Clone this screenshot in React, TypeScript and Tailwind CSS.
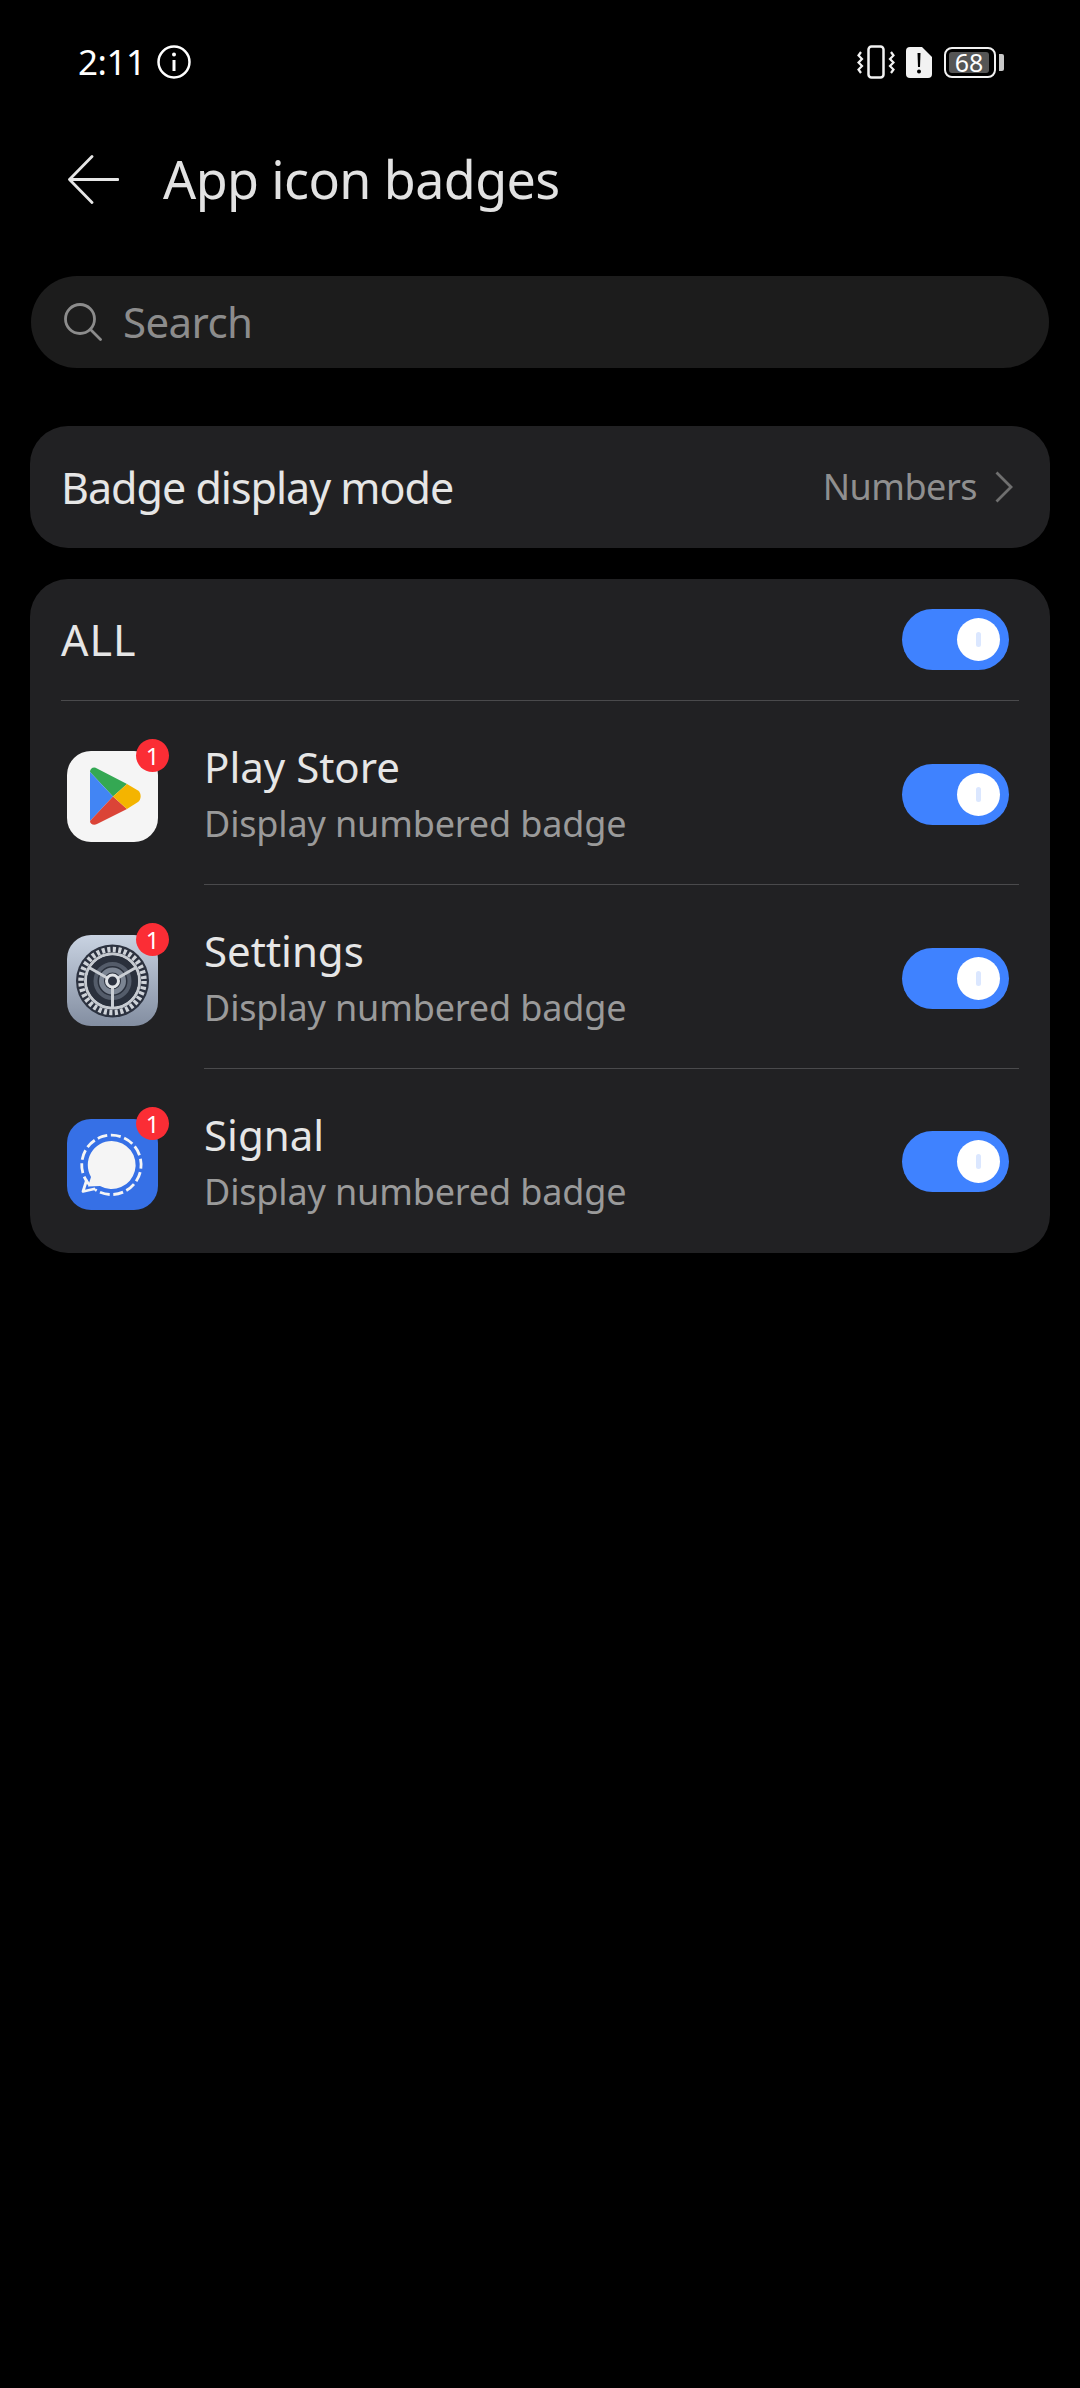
import type { ReactNode } from "react";

const Toggle = ({ className = "" }: { className?: string }) => (
  <div className={`flex h-[61px] w-[107px] items-center justify-end rounded-full bg-[#3f82ff] pr-[9px] ${className}`}>
    <div className="flex h-[43px] w-[43px] items-center justify-center rounded-full bg-white">
      <div className="h-[15px] w-[5px] rounded-full bg-[#dbe7ff]" />
    </div>
  </div>
);

const PlayIcon = () => (
  <div className="h-full w-full rounded-[24px] bg-[#f5f5f5]">
    <svg viewBox="0 0 91 91" className="h-full w-full">
      <path d="M23 21c0-4 4-5.500 7-3.500L60 33 46 45.500z" fill="#34a853" />
      <path d="M23 21v49l23-24.500z" fill="#4285f4" />
      <path d="M23 70c0 3.500 4 4.500 7 3L60 58 46 45.500z" fill="#db4437" />
      <path d="M60 33l11 6.500c3.500 2.500 3.500 9 0 11.500L60 58 46 45.500z" fill="#f4b400" />
    </svg>
  </div>
);

const SettingsIcon = () => (
  <div className="h-full w-full rounded-[24px] bg-gradient-to-b from-[#c9d3e2] to-[#838ea1]">
    <svg viewBox="0 0 91 91" className="h-full w-full">
      <circle cx="45.500" cy="46" r="36.500" fill="#2c3240" />
      <circle cx="45.500" cy="46" r="31.500" fill="none" stroke="#cfd3d9" strokeWidth="5.500" strokeDasharray="3.100 2.400" />
      <circle cx="45.500" cy="46" r="27" fill="none" stroke="#c6cad0" strokeWidth="3" />
      <circle cx="45.500" cy="46" r="25.500" fill="#2a303c" />
      <circle cx="45.500" cy="46" r="17" fill="none" stroke="#545c6a" strokeWidth="4" />
      <circle cx="45.500" cy="46" r="11" fill="none" stroke="#7b8492" strokeWidth="5" />
      <path d="M45.500 46v27M45.500 46 22 32.500M45.500 46 69 32.500" stroke="#c9cdd3" strokeWidth="3" />
      <circle cx="45.500" cy="46" r="6" fill="#2c3240" stroke="#dfe2e6" strokeWidth="3" />
    </svg>
  </div>
);

const SignalIcon = () => (
  <div className="h-full w-full rounded-[24px] bg-[#3670e6]">
    <svg viewBox="0 0 91 91" className="h-full w-full">
      <path d="M44.700 22a24 24 0 1 1-11.700 45L21 67.500 24 58a24 24 0 0 1 20.700-36z" fill="#f5f5f5" />
      <path d="M22.500 65.900A29.700 29.700 0 1 1 28 70.600" fill="none" stroke="#f5f5f5" strokeWidth="2.800" strokeDasharray="10 3.600" />
      <path d="M19.500 61.500 16 72.500l11-2.500" fill="none" stroke="#f5f5f5" strokeWidth="2.800" strokeLinejoin="round" strokeLinecap="round" />
    </svg>
  </div>
);

const apps: { name: string; icon: ReactNode; last?: boolean }[] = [
  { name: "Play Store", icon: <PlayIcon /> },
  { name: "Settings", icon: <SettingsIcon /> },
  { name: "Signal", icon: <SignalIcon />, last: true },
];

const AppRow = ({ name, icon, last }: { name: string; icon: ReactNode; last?: boolean }) => (
  <div className="flex h-[184px] items-stretch pl-[37px] pr-[31px]">
    <div className="relative mt-[50px] h-[91px] w-[91px]">
      {icon}
      <div className="absolute left-[69px] top-[-12px] flex h-[33px] w-[33px] items-center justify-center rounded-full bg-[#fb2d35] text-[24px] leading-none text-white">
        1
      </div>
    </div>
    <div className={`ml-[46px] flex flex-1 items-center justify-between pr-[10px] ${last ? "" : "border-b border-[#4a4a4c]"}`}>
      <div className="mt-[6px]">
        <div className="text-[42px] leading-[56px] text-[#e6e6e6]">{name}</div>
        <div className="text-[36px] leading-[58px] tracking-[-0.15px] text-[#9a9a9a]">Display numbered badge</div>
      </div>
      <Toggle className={last ? "" : "mt-[3px]"} />
    </div>
  </div>
);

const StatusIcons = () => (
  <div className="flex items-center">
    <svg width="38" height="34" viewBox="0 0 38 34" fill="none" stroke="#f2f2f2" strokeWidth="2.500">
      <rect x="11.500" y="1.500" width="15" height="31" rx="3" />
      <path d="M4 7l-2.500 3.500L5 14l-3.500 3.500L5 21l-3.500 3.500L4 28M34 7l2.500 3.500L33 14l3.500 3.500L33 21l3.500 3.500L34 28" strokeWidth="2.200" />
    </svg>
    <svg width="26" height="31" viewBox="0 0 26 31" className="ml-[11px]">
      <path d="M4 0h12l10 10v17a4 4 0 0 1-4 4H4a4 4 0 0 1-4-4V4a4 4 0 0 1 4-4z" fill="#f2f2f2" />
      <path d="M11.500 6h3l-.5 14h-2z" fill="#000" />
      <circle cx="13" cy="24.500" r="2" fill="#000" />
    </svg>
    <div className="ml-[12px] flex h-[31px] w-[52px] items-center rounded-[8px] border-[2.500px] border-[#f2f2f2] p-[3px]">
      <div className="flex h-full w-[40px] items-center justify-center rounded-[3px] bg-[#555555] text-[25px] leading-none text-white">
        68
      </div>
    </div>
    <div className="ml-[3px] h-[17px] w-[5px] rounded-r-[2px] bg-[#c8c8c8]" />
  </div>
);

export default function App() {
  return (
    <div className="h-[2388px] w-[1080px] overflow-hidden bg-black font-['Noto_Sans',sans-serif]">
      <div className="flex h-[130px] items-start justify-between pl-[78px] pr-[76px] pt-[45px]">
        <div className="flex items-center">
          <span className="text-[35px] leading-[34px] tracking-[-0.5px] text-white">2:11</span>
          <svg width="34" height="34" viewBox="0 0 34 34" fill="none" stroke="#fff" className="ml-[12px]">
            <circle cx="17" cy="17" r="15.500" strokeWidth="2.500" />
            <path d="M17 15v11" strokeWidth="3" />
            <circle cx="17" cy="9.500" r="2" fill="#fff" stroke="none" />
          </svg>
        </div>
        <StatusIcons />
      </div>

      <div className="flex h-[98px] items-center pl-[68px]">
        <svg width="51" height="49" viewBox="0 0 51 49" fill="none" stroke="#e6e6e6" strokeWidth="2.800" strokeLinecap="round" strokeLinejoin="round">
          <path d="M24 1.500 1.500 24.500 24 47.500M1.500 24.500H50" />
        </svg>
        <div className="ml-[44px] text-[52px] leading-none tracking-[-0.6px] text-[#e2e2e2]">App icon badges</div>
      </div>

      <div className="ml-[31px] mt-[48px] flex h-[92px] w-[1018px] items-center rounded-full bg-[#1c1c1c] pl-[33px]">
        <svg width="38" height="38" viewBox="0 0 38 38" fill="none" stroke="#8c8c8c" strokeWidth="2.800" strokeLinecap="round">
          <circle cx="16" cy="16" r="14.500" />
          <path d="M26.500 26.500 36.500 36.500" />
        </svg>
        <span className="ml-[21px] text-[42px] leading-none tracking-[-0.6px] text-[#8c8c8c]">Search</span>
      </div>

      <div className="ml-[30px] mt-[58px] flex h-[122px] w-[1020px] items-center justify-between rounded-[38px] bg-[#212123] pl-[31px] pr-[37px]">
        <span className="text-[43px] leading-none tracking-[-1px] text-[#e6e6e6]">Badge display mode</span>
        <div className="flex items-center">
          <span className="text-[36px] leading-none tracking-[-0.5px] text-[#8f8f8f]">Numbers</span>
          <svg width="18" height="32" viewBox="0 0 18 32" fill="none" stroke="#6f6f6f" strokeWidth="2.800" className="ml-[18px]">
            <path d="M1.500 1.500 16 16 1.500 30.500" />
          </svg>
        </div>
      </div>

      <div className="ml-[30px] mt-[31px] w-[1020px] rounded-[38px] bg-[#212123]">
        <div className="mx-[31px] flex h-[122px] items-center justify-between border-b border-[#4a4a4c] pr-[10px]">
          <span className="text-[43px] leading-none tracking-[1px] text-[#e6e6e6]">ALL</span>
          <Toggle />
        </div>
        {apps.map((a) => (
          <AppRow key={a.name} name={a.name} icon={a.icon} last={a.last} />
        ))}
      </div>
    </div>
  );
}
